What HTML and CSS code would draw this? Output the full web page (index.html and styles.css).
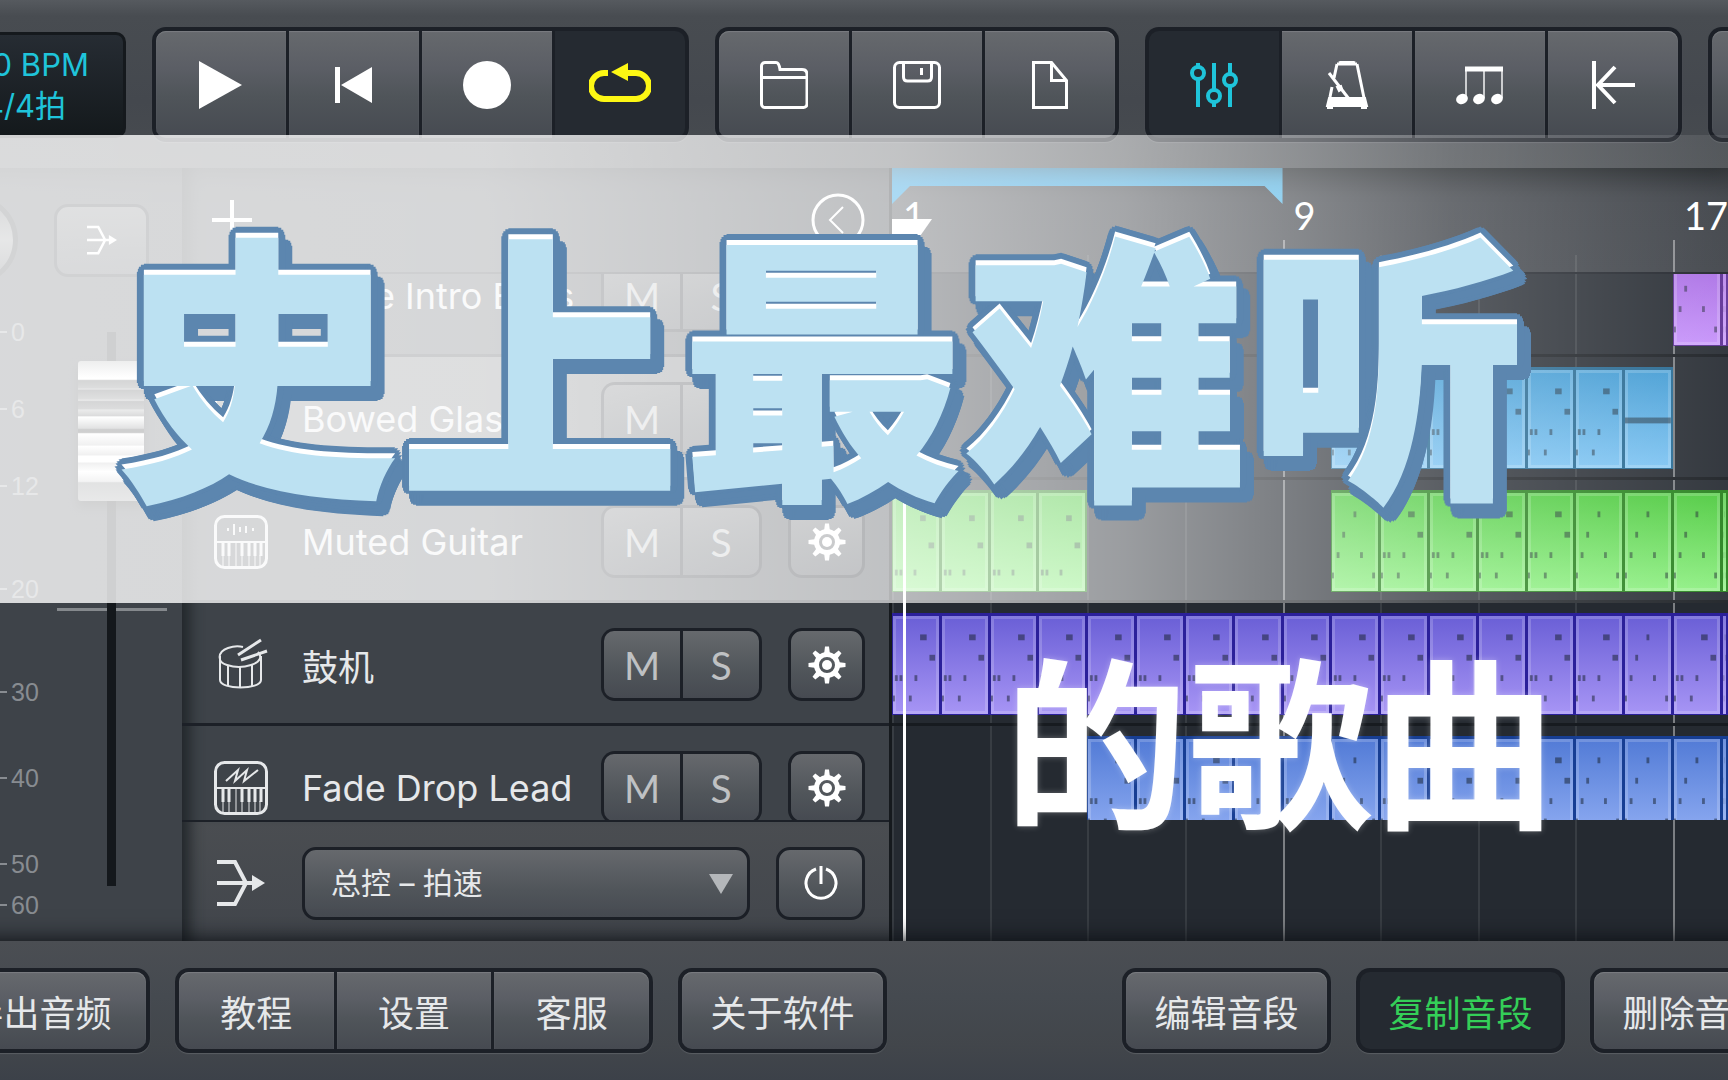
FILE: index.html
```html
<!DOCTYPE html>
<html lang="zh-CN">
  <head>
    <meta charset="UTF-8" />
    <meta name="viewport" content="width=device-width, initial-scale=1.0" />
    <title>史上最难听的歌曲</title>
    <link rel="stylesheet" href="styles.css">
  </head>
  <body>
    <svg class="sprite" aria-hidden="true">
      <symbol id="i-gear" viewBox="0 0 40 40">
        <g fill="currentColor">
          <path d="M18 1.500h4l1 8h-6zM18 38.500h4l1-8h-6z" />
          <path d="M18 1.500h4l1 8h-6zM18 38.500h4l1-8h-6z" transform="rotate(45 20 20)" />
          <path d="M18 1.500h4l1 8h-6zM18 38.500h4l1-8h-6z" transform="rotate(90 20 20)" />
          <path d="M18 1.500h4l1 8h-6zM18 38.500h4l1-8h-6z" transform="rotate(135 20 20)" />
          <circle cx="20" cy="20" r="5" />
        </g>
        <circle cx="20" cy="20" r="10.500" fill="none" stroke="currentColor" stroke-width="5" />
      </symbol>
      <symbol id="i-merge" viewBox="0 0 48 48">
        <path d="M0 3h18L29 24 18 45H0M0 24h36" fill="none" stroke="currentColor" stroke-width="4" />
        <path d="M35 16l13 8-13 8z" fill="currentColor" />
      </symbol>
      <symbol id="i-keys" viewBox="0 0 54 54">
        <rect x="1.500" y="1.500" width="51" height="51" rx="9" fill="none" stroke="currentColor" stroke-width="3" />
        <path d="M2 27h50" stroke="currentColor" stroke-width="2" />
        <path d="M9 27v14M15 27v14M28 27v14M35 27v14M41 27v14M47 27v14" stroke="currentColor" stroke-width="3" />
        <path d="M9 40v12M15 40v12M22 27v25M28 40v12M35 40v12M41 40v12M46 40v12" stroke="currentColor" stroke-width="1" />
      </symbol>
    </svg>

    <div class="app">
      <header class="topbar">
        <div class="lcd">
          <span>120 BPM</span>
          <span>4/4拍</span>
        </div>
        <div class="group">
          <button class="tool" aria-label="播放">
            <svg viewBox="0 0 48 48"><path d="M2 0l43 24L2 48z" fill="currentColor" /></svg>
          </button>
          <button class="tool" aria-label="回到开头">
            <svg viewBox="0 0 48 48"><path d="M5 6h5v36H5zM42 6v36L11 24z" fill="currentColor" /></svg>
          </button>
          <button class="tool" aria-label="录音">
            <svg viewBox="0 0 48 48"><circle cx="24" cy="24" r="24" fill="currentColor" /></svg>
          </button>
          <button class="tool active loop" aria-label="循环">
            <svg class="wide" viewBox="0 0 62 48">
              <path d="M19 12h-4a13 13 0 0 0 0 26h32a13 13 0 0 0 0-26H36" fill="none" stroke="currentColor" stroke-width="6" />
              <path d="M39 2v18L22 11z" fill="currentColor" />
            </svg>
          </button>
        </div>
        <div class="group">
          <button class="tool" aria-label="打开">
            <svg viewBox="0 0 48 48" fill="none" stroke="currentColor" stroke-width="3">
              <path d="M1.500 43V5a3.500 3.500 0 0 1 3.500-3.500h11q3 0 4 7h22q5 0 5 5V43a3.500 3.500 0 0 1-3.500 3.500H5A3.500 3.500 0 0 1 1.500 43zM2 16.500h44" />
            </svg>
          </button>
          <button class="tool" aria-label="保存">
            <svg viewBox="0 0 48 48" fill="none" stroke="currentColor" stroke-width="3">
              <rect x="1.500" y="1.500" width="45" height="45" rx="5" />
              <path d="M10.500 2v14q0 4 4 4h20q4 0 4-4V2M28.500 7v7" />
            </svg>
          </button>
          <button class="tool" aria-label="新建">
            <svg viewBox="0 0 48 48" fill="none" stroke="currentColor" stroke-width="3">
              <path d="M7.500 1.500h18l15 18v27h-33zM25.500 1.500v18h15" />
            </svg>
          </button>
        </div>
        <div class="group">
          <button class="tool active mixer" aria-label="混音">
            <svg viewBox="0 0 48 48" fill="none" stroke="currentColor" stroke-width="4">
              <path d="M8 2v3M8 18v28M24 2v26M24 42v4M40 2v10M40 26v20" />
              <circle cx="8" cy="12" r="6" /><circle cx="24" cy="35" r="6" /><circle cx="40" cy="19" r="6" />
            </svg>
          </button>
          <button class="tool" aria-label="节拍器">
            <svg viewBox="0 0 48 48" fill="none" stroke="currentColor" stroke-width="2">
              <path d="M14 3h20M14 3l-3 14M9 26L7 36M34 3l7 34" stroke-width="3" />
              <path d="M16 2q8-3 16 0" stroke-width="3" />
              <path d="M6 12l20 26" stroke-width="3" />
              <path d="M14 26l4-1 1 3-3 2z" fill="currentColor" />
              <path d="M6 37h36l2 8H4zM5 45v3h4v-3M39 45v3h4v-3" fill="currentColor" />
            </svg>
          </button>
          <button class="tool" aria-label="音符">
            <svg viewBox="0 0 48 48" fill="none" stroke="currentColor" stroke-width="2">
              <path d="M10 7v30M28 7v30M46 7v30" stroke-opacity="0.7" />
              <path d="M9 8h38" stroke-width="5" />
              <g fill="currentColor" stroke="none">
                <ellipse cx="6" cy="38" rx="6" ry="5" transform="rotate(-25 6 38)" />
                <ellipse cx="23" cy="38" rx="6" ry="5" transform="rotate(-25 23 38)" />
                <ellipse cx="41" cy="38" rx="6" ry="5" transform="rotate(-25 41 38)" />
              </g>
            </svg>
          </button>
          <button class="tool" aria-label="收起">
            <svg viewBox="0 0 48 48" fill="none" stroke="currentColor" stroke-width="4">
              <path d="M5 0v48M46 24H8M26 6L9 24l17 18" />
            </svg>
          </button>
        </div>
        <div class="group">
          <button class="tool" aria-label="更多"></button>
        </div>
      </header>

      <main class="main">
        <section class="strip">
          <div class="strip-head">
            <div class="knob"></div>
            <button class="btn route" aria-label="输出"><svg><use href="#i-merge" /></svg></button>
          </div>
          <div class="fader">
            <ol class="scale">
              <li>0</li><li>6</li><li>12</li><li>20</li><li>30</li><li>40</li><li>50</li><li>60</li>
            </ol>
            <input class="volume" type="range" min="0" max="100" value="93" aria-label="音量">
            <div class="mark"></div>
          </div>
        </section>

        <section class="tracks">
          <div class="tracks-head">
            <button class="plain" aria-label="添加音轨">
              <svg viewBox="0 0 40 40"><path d="M20 0v40M0 20h40" stroke="currentColor" stroke-width="4" /></svg>
            </button>
            <button class="plain back" aria-label="返回">
              <svg viewBox="0 0 54 54" fill="none" stroke="currentColor" stroke-width="3"><circle cx="27" cy="27" r="25" /><path d="M32 14L19 27l13 13" stroke-width="2" /></svg>
            </button>
          </div>
          <div class="list">
            <div class="track">
              <svg class="kind"><use href="#i-keys" /></svg>
              <span class="name">Pluke Intro Bass</span>
              <div class="ms"><button>M</button><button>S</button></div>
              <button class="btn gear" aria-label="音轨设置"><svg><use href="#i-gear" /></svg></button>
            </div>
            <div class="track selected">
              <svg class="kind"><use href="#i-keys" /></svg>
              <span class="name">Bowed Glass</span>
              <div class="ms"><button>M</button><button>S</button></div>
              <button class="btn gear" aria-label="音轨设置"><svg><use href="#i-gear" /></svg></button>
            </div>
            <div class="track">
              <svg class="kind" viewBox="0 0 54 54">
                <use href="#i-keys" />
                <path d="M14 13v3M20 9v11M26 12v5M32 11v7M39 13v3" stroke="currentColor" stroke-width="2" />
              </svg>
              <span class="name">Muted Guitar</span>
              <div class="ms"><button>M</button><button>S</button></div>
              <button class="btn gear" aria-label="音轨设置"><svg><use href="#i-gear" /></svg></button>
            </div>
            <div class="track">
              <svg class="kind" viewBox="0 0 54 54" fill="none" stroke="currentColor" stroke-width="2">
                <path d="M29 9Q22 7 14 10C3 14 3 24 13 27q12 4 24 0c10-3 11-9 7-13" />
                <path d="M6 18v24c0 10 41 10 41 0V18M14 27v21M26 29v21M38 27v21" />
                <path d="M24 17L47 2M27 22l26-9" stroke-width="3" />
              </svg>
              <span class="name">鼓机</span>
              <div class="ms"><button>M</button><button>S</button></div>
              <button class="btn gear" aria-label="音轨设置"><svg><use href="#i-gear" /></svg></button>
            </div>
            <div class="track">
              <svg class="kind" viewBox="0 0 54 54">
                <use href="#i-keys" />
                <path d="M12 20L24 9l-3 11L33 9l-3 11L44 9" fill="none" stroke="currentColor" stroke-width="2" />
              </svg>
              <span class="name">Fade Drop Lead</span>
              <div class="ms"><button>M</button><button>S</button></div>
              <button class="btn gear" aria-label="音轨设置"><svg><use href="#i-gear" /></svg></button>
            </div>
          </div>
          <div class="master">
            <svg class="kind small"><use href="#i-merge" /></svg>
            <div class="picker">
              <select aria-label="自动化">
                <option>总控 – 拍速</option>
              </select>
              <svg viewBox="0 0 24 20"><path d="M0 0h24L12 20z" fill="currentColor" /></svg>
            </div>
            <button class="btn power" aria-label="开关">
              <svg viewBox="0 0 36 36" fill="none" stroke="currentColor" stroke-width="3"><path d="M13 4a15 15 0 1 0 10 0M18 1v18" /></svg>
            </button>
          </div>
        </section>

        <section class="timeline">
          <div class="grid-lines" id="lines"></div>
          <div class="ruler">
            <div class="loop-range"></div>
            <span class="bar-no b1">1</span>
            <span class="bar-no b9">9</span>
            <span class="bar-no b17">17</span>
          </div>
          <div class="lanes" id="lanes"></div>
          <div class="playhead"></div>
        </section>
      </main>

      <footer class="bottombar">
        <div class="group export"><button class="tool">导出音频</button></div>
        <div class="group menu">
          <button class="tool">教程</button>
          <button class="tool">设置</button>
          <button class="tool">客服</button>
        </div>
        <div class="group action"><button class="tool">关于软件</button></div>
        <div class="group action first"><button class="tool">编辑音段</button></div>
        <div class="group action"><button class="tool active copy">复制音段</button></div>
        <div class="group action"><button class="tool">删除音段</button></div>
      </footer>

      <div class="veil"></div>
      <h1 class="title">史上最难听</h1>
      <p class="subtitle">的歌曲</p>
    </div>
    <script src="script.js"></script>
  </body>
</html>
```
FILE: styles.css
```css
* {
  margin: 0;
  padding: 0;
  box-sizing: border-box;
}
body {
  background: #3d4249;
  color: #e6e8ea;
  font-family: Inter, "Noto Sans CJK SC", sans-serif;
}
button,
select {
  font: inherit;
  color: inherit;
  border: none;
  background: none;
  cursor: pointer;
}
svg {
  display: block;
}
.sprite {
  position: absolute;
  width: 0;
  height: 0;
}
.app {
  position: relative;
  display: flex;
  flex-direction: column;
  height: 100vh;
  min-height: 800px;
  overflow: hidden;
}

/* bars */
.topbar {
  position: relative;
  z-index: 1;
  display: flex;
  gap: 26px;
  flex: none;
  margin-left: -76px;
  padding: 27px 0 26px;
  background: linear-gradient(#565a5f, #484c51 16px, #44484e 60%, #484c50);
  box-shadow: 0 4px 20px rgba(10, 13, 16, 0.5);
}
.lcd {
  display: flex;
  flex-direction: column;
  justify-content: center;
  flex: none;
  width: 202px;
  height: 106px;
  margin-top: 5px;
  border: 3px solid #15191d;
  border-radius: 10px;
  background: linear-gradient(#262c33, #14191c);
  color: #1fc4da;
  font-size: 31px;
  line-height: 41px;
  text-align: center;
}
.group {
  display: flex;
  gap: 3px;
  flex: none;
  padding: 4px;
  border-radius: 14px;
  background: #1c2027;
  box-shadow: 0 1px 1px #5a5e63;
}
.tool {
  display: flex;
  align-items: center;
  justify-content: center;
  width: 130px;
  height: 107px;
  background: linear-gradient(#66696d, #5b5e65 35%, #50555a 60%, #464a51);
  box-shadow: inset 0 1px 1px #7a7d81;
  color: #fff;
}
.tool:first-child {
  border-radius: 10px 0 0 10px;
}
.tool:last-child {
  border-radius: 0 10px 10px 0;
}
.tool:only-child {
  border-radius: 10px;
}
.tool svg {
  width: 48px;
  height: 48px;
}
.tool svg.wide {
  width: 62px;
}
.tool.active {
  background: #252a31;
  box-shadow: none;
}
.loop {
  color: #fdf714;
}
.mixer {
  color: #1fc4da;
}
.bottombar {
  position: relative;
  z-index: 1;
  display: flex;
  gap: 25px;
  flex: none;
  margin: 0 -71px;
  padding: 27px 0;
  background: linear-gradient(#4b4e53, #454a50 40%, #42464b 75%, #3c4149);
  box-shadow: 0 -2px 20px rgba(10, 13, 18, 0.9);
}
.bottombar .tool {
  width: 100%;
  height: 77px;
  color: #e6e8ea;
  font-size: 36px;
}
.bottombar .tool.copy {
  color: #34cf58;
}
.export {
  width: 221px;
}
.menu {
  width: 478px;
}
.action {
  width: 209px;
}
.first {
  margin-left: auto;
}

/* work area */
.main {
  display: grid;
  grid-template-columns: 182px 710px 1fr;
  flex: 1;
  min-height: 0;
}
.btn {
  display: flex;
  align-items: center;
  justify-content: center;
  height: 73px;
  border: 3px solid #1c2027;
  border-radius: 14px;
  background: linear-gradient(#66696d, #50555a 60%, #464a51);
  color: #fff;
}

/* channel strip */
.strip {
  display: flex;
  flex-direction: column;
  background: #3e4349;
}
.strip-head {
  display: flex;
  align-items: center;
  gap: 36px;
  height: 144px;
}
.knob {
  width: 90px;
  height: 90px;
  margin-left: -72px;
  border: 5px solid #24282d;
  border-radius: 50%;
  background: linear-gradient(#44484d, #85888b, #44484d);
}
.route {
  width: 95px;
}
.route svg {
  width: 30px;
  height: 30px;
}
.fader {
  position: relative;
  flex: 1;
}
.scale {
  display: grid;
  grid-template-rows: 77px 77px 103px 103px 86px 86px 41px 28px;
  margin-top: 6px;
  list-style: none;
  color: #888c91;
  font-family: "Liberation Sans", sans-serif;
  font-size: 25px;
  line-height: 28px;
}
.scale li {
  display: flex;
  align-items: center;
  gap: 4px;
  height: 28px;
}
.scale li::before {
  content: "";
  width: 7px;
  height: 2px;
  background: #888c91;
}
.volume {
  position: absolute;
  top: 20px;
  left: 78px;
  width: 66px;
  height: 554px;
  appearance: none;
  writing-mode: vertical-lr;
  direction: rtl;
  background: linear-gradient(#14181c, #14181c) center / 9px 100% no-repeat;
}
.volume::-webkit-slider-thumb {
  appearance: none;
  width: 66px;
  height: 140px;
  border-radius: 3px;
  background: linear-gradient(#a9abac, #fff 12%, #fff 13%, #303336 14%, #55585a 19%, #8a8d8f 20%, #303336 21%, #606365 27%, #9a9c9e 28%, #303336 29%, #505355 34%, #9a9c9e 35%, #505355 39%, #fff 40%, #707375 48%, #101214 49%, #101214 51%, #fff 52%, #b8b9ba 60%, #fff 61%, #b8b9ba 67%, #fff 68%, #fff 72%, #b8b9ba 73%, #fff 79%, #c6c7c8 86%, #707375 87%, #909294);
  box-shadow: 0 6px 10px rgba(0, 0, 0, 0.5);
}
.mark {
  position: absolute;
  top: 296px;
  left: 57px;
  width: 110px;
  height: 3px;
  background: linear-gradient(90deg, #85898d 50px, transparent 50px, transparent 59px, #85898d 59px);
}

/* track list */
.tracks {
  display: flex;
  flex-direction: column;
  min-height: 0;
  border-right: 3px solid #15191d;
  background: #3e4349;
  box-shadow: inset 20px 0 14px -12px #22272b;
}
.tracks-head {
  display: flex;
  align-items: center;
  justify-content: space-between;
  flex: none;
  height: 104px;
  padding: 0 24px 0 30px;
}
.plain {
  color: #fff;
}
.plain svg {
  width: 40px;
  height: 40px;
}
.plain.back svg {
  width: 54px;
  height: 54px;
}
/* scrolled so that the first row is partly hidden */
.list,
.lanes {
  display: flex;
  flex-direction: column;
  justify-content: flex-end;
  flex: 1;
  min-height: 0;
  overflow: hidden;
  border-top: 2px solid #1c2027;
}
.list .track:last-child,
.lanes .lane:last-child {
  margin-bottom: -29px;
}
.track {
  display: flex;
  align-items: center;
  flex: none;
  height: 123px;
  padding: 3px 24px 0 32px;
  border-bottom: 3px solid #1c2027;
}
.track.selected {
  background: #62666a;
}
.kind {
  width: 54px;
  height: 54px;
  margin-right: 34px;
}
.kind.small {
  padding: 3px;
}
.name {
  flex: 1;
  white-space: nowrap;
  font-size: 36px;
}
.ms {
  display: flex;
  gap: 3px;
  height: 73px;
  margin-right: 26px;
  padding: 3px;
  border-radius: 14px;
  background: #1c2027;
}
.ms button {
  width: 76px;
  border-radius: 10px 0 0 10px;
  background: linear-gradient(#66696d, #50555a 60%, #464a51);
  color: #bfc1c3;
  font-family: Lato, sans-serif;
  font-size: 39px;
}
.ms button:last-child {
  border-radius: 0 10px 10px 0;
}
.gear {
  width: 77px;
}
.gear svg {
  width: 40px;
  height: 40px;
}
.master {
  position: relative;
  display: flex;
  align-items: center;
  flex: none;
  height: 121px;
  padding: 3px 24px 0 32px;
  border-top: 2px solid #1c2027;
  background: linear-gradient(#4a4d51, #42464c);
  box-shadow: inset 20px 0 14px -12px #22272b;
}
.picker {
  position: relative;
  flex: 1;
  margin-right: 26px;
}
.picker select {
  width: 100%;
  height: 73px;
  padding: 0 26px;
  appearance: none;
  border: 3px solid #1c2027;
  border-radius: 14px;
  background: linear-gradient(#66696d, #50555a 60%, #464a51);
  font-size: 30px;
}
.picker svg {
  position: absolute;
  top: 27px;
  right: 17px;
  width: 24px;
  height: 20px;
  color: #b4b7ba;
  pointer-events: none;
}
.power {
  width: 89px;
}
.power svg {
  width: 36px;
  height: 36px;
}

/* timeline: 17 bars and a bit */
.timeline {
  position: relative;
  display: flex;
  flex-direction: column;
  min-width: 0;
  min-height: 0;
  padding-bottom: 121px;
  background: #252a31;
}
.ruler,
.lane,
.grid-lines {
  display: grid;
  grid-template-columns: repeat(17, 8fr) 1fr;
}
.ruler {
  flex: none;
  height: 104px;
  background: linear-gradient(#2a2e32, #3a3e44 30px, #3c4046);
}
.loop-range {
  grid-area: 1 / 1 / 2 / 9;
  height: 36px;
  background: linear-gradient(90deg, #0090e0, #4fb4e6);
  clip-path: polygon(0 0, 100% 0, 100% 100%, calc(100% - 18px) 18px, 18px 18px, 0 100%);
}
.bar-no {
  grid-row: 1;
  padding: 24px 0 0 11px;
  color: #fff;
  font-family: Lato, sans-serif;
  font-size: 38px;
  line-height: 46px;
}
.b1 {
  grid-column: 1;
}
.b9 {
  grid-column: 9;
}
.b17 {
  grid-column: 17 / 19;
}
.grid-lines {
  position: absolute;
  z-index: 1;
  top: 72px;
  right: 0;
  bottom: 0;
  left: 0;
}
.grid-lines div {
  grid-row: 1;
  margin-top: 15px;
  border-left: 2px solid rgba(255, 255, 255, 0.09);
}
.grid-lines div.major {
  margin-top: 0;
  border-color: rgba(255, 255, 255, 0.4);
}
.lanes,
.lane {
  position: relative;
}
.lanes {
  z-index: 1;
}
.lane {
  flex: none;
  height: 123px;
  padding-top: 10px;
  border-bottom: 3px solid #171b20;
}
.clip {
  grid-row: 1;
  height: 102px;
  min-width: 0;
  border: solid var(--edge);
  border-width: 3px 2px 1px 1px;
  background: linear-gradient(var(--from), var(--to));
  box-shadow: inset 0 0 0 3px rgba(255, 255, 255, 0.18);
  overflow: hidden;
}
.clip svg {
  width: 100%;
  height: 100%;
  fill: rgba(20, 30, 40, 0.5);
}
.violet {
  --from: #a062dd;
  --to: #c591fa;
  --edge: #5c2f94;
}
.sky {
  --from: #3e99d2;
  --to: #7ac2f2;
  --edge: #226690;
}
.green {
  --from: #4bc93c;
  --to: #8cef80;
  --edge: #25801b;
}
.purple {
  --from: #6a5fd6;
  --to: #a795f5;
  --edge: #2b209a;
}
.blue {
  --from: #527bd6;
  --to: #90adf3;
  --edge: #173e93;
}
.playhead {
  position: absolute;
  z-index: 1;
  top: 62px;
  bottom: 0;
  left: 11px;
  width: 3px;
  background: #fff;
}
.playhead::before {
  content: "";
  position: absolute;
  top: -11px;
  left: -11px;
  width: 40px;
  height: 20px;
  background: #fff;
  clip-path: polygon(0 0, 100% 0, 65% 100%, 0 100%);
}

/* cover text */
.veil {
  position: absolute;
  z-index: 2;
  top: 135px;
  right: 0;
  left: 0;
  height: 468px;
  background: linear-gradient(90deg, rgba(255, 255, 255, 0.8) 0%, rgba(255, 255, 255, 0.79) 28%, rgba(255, 255, 255, 0.67) 52%, rgba(255, 255, 255, 0.54) 65%, rgba(255, 255, 255, 0.39) 75%, rgba(255, 255, 255, 0.24) 84%, rgba(255, 255, 255, 0.14) 93%, rgba(255, 255, 255, 0.07) 100%);
  pointer-events: none;
}
.title,
.subtitle {
  position: absolute;
  z-index: 3;
  white-space: nowrap;
  font-family: "Noto Sans CJK SC", sans-serif;
  pointer-events: none;
}
/* white top edge, round outline, then the same outline dropped to the lower right */
.title {
  top: 214px;
  left: 115px;
  color: #bce1f2;
  font-size: 283px;
  font-weight: 900;
  line-height: 283px;
  text-shadow:
    0 -5px 0 #fff,
    7px -3px 0 #5c86af, 6px 0 0 #5c86af, 5px 2px 0 #5c86af, 3px 3px 0 #5c86af,
    0 4px 0 #5c86af, -3px 3px 0 #5c86af, -5px 2px 0 #5c86af, -6px 0 0 #5c86af,
    -7px -3px 0 #5c86af, -6px -6px 0 #5c86af, -5px -8px 0 #5c86af, -3px -10px 0 #5c86af,
    0 -11px 0 #5c86af, 3px -10px 0 #5c86af, 5px -8px 0 #5c86af, 6px -6px 0 #5c86af,
    14px 8px 0 #5c86af, 13px 11px 0 #5c86af, 12px 13px 0 #5c86af, 10px 14px 0 #5c86af,
    7px 15px 0 #5c86af, 4px 14px 0 #5c86af, 2px 13px 0 #5c86af, 1px 11px 0 #5c86af,
    0 8px 0 #5c86af, 1px 5px 0 #5c86af, 2px 3px 0 #5c86af, 4px 2px 0 #5c86af,
    7px 1px 0 #5c86af, 10px 2px 0 #5c86af, 12px 3px 0 #5c86af, 13px 5px 0 #5c86af;
}
.subtitle {
  top: 643px;
  left: 1004px;
  color: #fff;
  font-size: 184px;
  font-weight: 700;
  line-height: 184px;
  text-shadow: 0 0 6px rgba(255, 255, 255, 0.3);
}
```
FILE: script.js
```js
// note blocks inside a clip: [x, y, width]
const patterns = {
  a: [[29, 19, 7], [39, 40, 6], [2, 61, 3], [7, 61, 3], [23, 61, 3], [0, 82, 2], [17, 82, 3]],
  c: [[23, 19, 3], [11, 40, 3], [5, 61, 3], [30, 61, 3], [0, 82, 2], [43, 82, 3]],
  d: [[29, 23, 6], [38, 51, 6], [2, 79, 3], [7, 79, 3], [22, 79, 3]],
  line: [[0, 49, 49]],
};

// one string per lane, one letter per bar, "." is an empty bar
const lanes = [
  { color: "violet", bars: "................cc" },
  { color: "sky", bars: ".........aaaaaal.." },
  { color: "green", bars: "dddd.....caaaacccc" },
  { color: "purple", bars: "aaaaaaaaaaaaaaacaa" },
  { color: "blue", bars: "....aaaaacaaaacccc" },
];

const lanesEl = document.querySelector("#lanes");
lanes.forEach((lane) => {
  const row = document.createElement("div");
  row.className = "lane";
  [...lane.bars].forEach((b, i) => {
    if (b === ".") return;
    const notes = patterns[b === "l" ? "line" : b];
    const clip = document.createElement("div");
    clip.className = `clip ${lane.color}`;
    clip.style.gridColumn = i + 1;
    const rects = notes
      .map(([x, y, w]) => `<rect x="${x}" y="${y}" width="${w}" height="6" />`)
      .join("");
    clip.innerHTML = `<svg viewBox="0 0 49 101" preserveAspectRatio="none">${rects}</svg>`;
    row.appendChild(clip);
  });
  lanesEl.appendChild(row);
});

const linesEl = document.querySelector("#lines");
for (let bar = 1; bar <= 17; bar += 2) {
  const line = document.createElement("div");
  line.style.gridColumn = bar;
  if (bar === 9 || bar === 17) line.className = "major";
  linesEl.appendChild(line);
}
```
